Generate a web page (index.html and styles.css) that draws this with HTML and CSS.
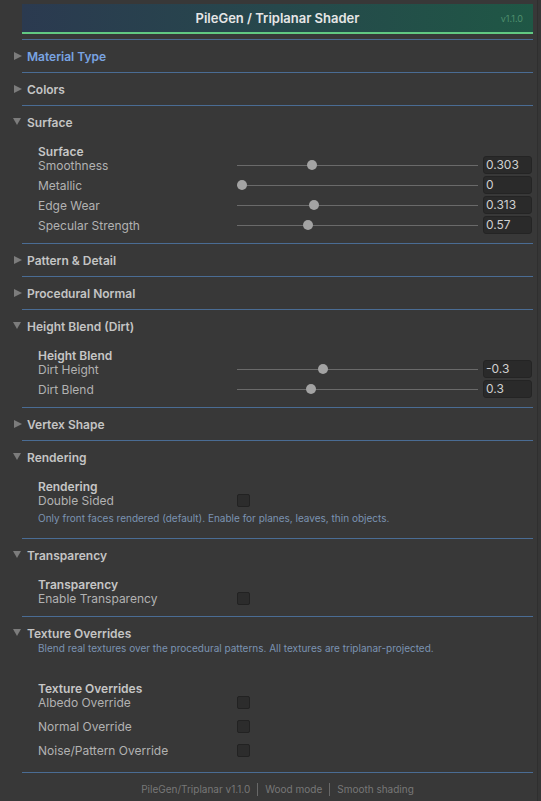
FILE: index.html
```
<!DOCTYPE html>
<html>
<head>
<meta charset="utf-8">
<link rel="stylesheet" href="styles.css">
</head>
<body>
<div class="scrollbar"></div>
<div class="inspector">
  <div class="title-bar">
    <span></span>
    <span class="title">PileGen / Triplanar Shader</span>
    <span class="version">v1.1.0</span>
  </div>
  <div class="rule first"></div>

  <div class="sec-head active"><svg class="tri" viewBox="0 0 8 8"><polygon points="0,0 8,4 0,8"/></svg><span>Material Type</span></div>
  <div class="rule"></div>

  <div class="sec-head"><svg class="tri" viewBox="0 0 8 8"><polygon points="0,0 8,4 0,8"/></svg><span>Colors</span></div>
  <div class="rule"></div>

  <div class="sec-head"><svg class="tri down" viewBox="0 0 8 8"><polygon points="0,0 8,0 4,7"/></svg><span>Surface</span></div>
  <div class="content">
    <div class="sub">Surface</div>
    <div class="row"><span class="label">Smoothness</span><div class="slider"><div class="knob" style="--v:0.303"></div></div><div class="field">0.303</div></div>
    <div class="row"><span class="label">Metallic</span><div class="slider"><div class="knob" style="--v:0"></div></div><div class="field">0</div></div>
    <div class="row"><span class="label">Edge Wear</span><div class="slider"><div class="knob" style="--v:0.313"></div></div><div class="field">0.313</div></div>
    <div class="row"><span class="label">Specular Strength</span><div class="slider"><div class="knob" style="--v:0.285"></div></div><div class="field">0.57</div></div>
  </div>
  <div class="rule"></div>

  <div class="sec-head"><svg class="tri" viewBox="0 0 8 8"><polygon points="0,0 8,4 0,8"/></svg><span>Pattern &amp; Detail</span></div>
  <div class="rule"></div>

  <div class="sec-head"><svg class="tri" viewBox="0 0 8 8"><polygon points="0,0 8,4 0,8"/></svg><span>Procedural Normal</span></div>
  <div class="rule"></div>

  <div class="sec-head"><svg class="tri down" viewBox="0 0 8 8"><polygon points="0,0 8,0 4,7"/></svg><span>Height Blend (Dirt)</span></div>
  <div class="content">
    <div class="sub">Height Blend</div>
    <div class="row"><span class="label">Dirt Height</span><div class="slider"><div class="knob" style="--v:0.35"></div></div><div class="field">-0.3</div></div>
    <div class="row"><span class="label">Dirt Blend</span><div class="slider"><div class="knob" style="--v:0.3"></div></div><div class="field">0.3</div></div>
  </div>
  <div class="rule"></div>

  <div class="sec-head"><svg class="tri" viewBox="0 0 8 8"><polygon points="0,0 8,4 0,8"/></svg><span>Vertex Shape</span></div>
  <div class="rule"></div>

  <div class="sec-head"><svg class="tri down" viewBox="0 0 8 8"><polygon points="0,0 8,0 4,7"/></svg><span>Rendering</span></div>
  <div class="content with-help">
    <div class="sub">Rendering</div>
    <div class="row"><span class="label">Double Sided</span><div class="check"></div></div>
    <div class="help">Only front faces rendered (default). Enable for planes, leaves, thin objects.</div>
  </div>
  <div class="rule"></div>

  <div class="sec-head"><svg class="tri down" viewBox="0 0 8 8"><polygon points="0,0 8,0 4,7"/></svg><span>Transparency</span></div>
  <div class="content">
    <div class="sub">Transparency</div>
    <div class="row"><span class="label">Enable Transparency</span><div class="check"></div></div>
  </div>
  <div class="rule"></div>

  <div class="sec-head described">
    <div class="head-line"><svg class="tri down" viewBox="0 0 8 8"><polygon points="0,0 8,0 4,7"/></svg><span>Texture Overrides</span></div>
    <div class="help head-help">Blend real textures over the procedural patterns. All textures are triplanar-projected.</div>
  </div>
  <div class="content spaced">
    <div class="sub">Texture Overrides</div>
    <div class="row"><span class="label">Albedo Override</span><div class="check"></div></div>
    <div class="row"><span class="label">Normal Override</span><div class="check"></div></div>
    <div class="row"><span class="label">Noise/Pattern Override</span><div class="check"></div></div>
  </div>
  <div class="rule"></div>

  <div class="footer">
    <span>PileGen/Triplanar v1.1.0</span><i class="sep"></i><span>Wood mode</span><i class="sep"></i><span>Smooth shading</span>
  </div>
</div>
</body>
</html>
```
FILE: styles.css
```
html, body {
  margin: 0;
  padding: 0;
  background: #383838;
  width: 541px;
  height: 801px;
  overflow: hidden;
  font-family: Inter, "Noto Sans", sans-serif;
}

.scrollbar {
  position: absolute;
  top: 0;
  right: 0;
  width: 3px;
  height: 801px;
  border-left: 1px solid #2f2f2f;
  background: #363636;
}

.inspector {
  padding: 4px 8px 0 13px;
}

.title-bar {
  margin-left: 9px;
  height: 28px;
  border-bottom: 2px solid #62c982;
  background: linear-gradient(90deg, #2b3a50 0%, #26484c 50%, #1f5745 100%);
  display: grid;
  grid-template-columns: 1fr auto 1fr;
  align-items: center;
  padding: 0 10px;
}

.title {
  color: #e6e6e6;
  font-size: 13px;
  font-weight: 600;
}

.version {
  justify-self: end;
  color: #4f8f6d;
  font-size: 9px;
}

.rule {
  margin-left: 9px;
  height: 1px;
  background: #4a6c94;
}

.rule.first {
  margin-top: 5px;
}

.sec-head {
  height: 32px;
  display: flex;
  align-items: center;
  gap: 5px;
  color: #c4c4c4;
  font-size: 12px;
  font-weight: 600;
}

.sec-head.active {
  color: #79a4e2;
}

.tri {
  width: 8px;
  height: 8px;
  margin-left: 1px;
  fill: #7c7c7c;
  flex: none;
}

.tri.down {
  margin-left: 0;
  margin-right: 1px;
}

.sec-head.described {
  height: auto;
  display: block;
  padding-top: 9px;
}

.head-line {
  display: flex;
  align-items: center;
  gap: 5px;
  height: 14px;
}

.head-help {
  margin-top: 3px;
  padding-left: 25px;
  font-weight: 400;
}

.content {
  padding: 9px 0 9px 25px;
}

.content.with-help {
  padding-bottom: 13px;
}

.content.with-help .help {
  margin-top: 0;
}

.content.spaced {
  padding-top: 29px;
  padding-bottom: 13px;
}

.content.spaced .row {
  height: 18px;
  margin-bottom: 6px;
}

.content.spaced .row:last-child {
  margin-bottom: 0;
}

.sub {
  height: 9px;
  line-height: 9px;
  color: #c6c6c6;
  font-size: 12px;
  font-weight: 600;
}

.row {
  display: grid;
  grid-template-columns: 194px 241px 49px;
  column-gap: 5px;
  align-items: center;
  height: 18px;
  margin-bottom: 2px;
}

.row:last-child {
  margin-bottom: 0;
}

.label {
  color: #b2b2b2;
  font-size: 12px;
}

.slider {
  position: relative;
  height: 18px;
}

.slider::before {
  content: "";
  position: absolute;
  left: 0;
  right: 0;
  top: 9px;
  height: 1px;
  background: #6a6a6a;
}

.knob {
  position: absolute;
  top: 4px;
  width: 10px;
  height: 10px;
  border-radius: 50%;
  background: #a3a3a3;
  left: calc(var(--v) * (100% - 10px));
}

.field {
  height: 16px;
  border: 1px solid #242424;
  border-radius: 3px;
  background: #2a2a2a;
  color: #d0d0d0;
  font-size: 12px;
  line-height: 16px;
  padding-left: 2px;
}

.check {
  width: 11px;
  height: 11px;
  border: 1px solid #222;
  border-radius: 2px;
  background: #2c2c2c;
}

.help {
  margin-top: 1px;
  color: #7b93b2;
  font-size: 10px;
  line-height: 14px;
}

.footer {
  display: flex;
  justify-content: center;
  align-items: center;
  gap: 7px;
  margin-left: 9px;
  padding-top: 9px;
  color: #777;
  font-size: 10px;
  line-height: 14px;
}

.sep {
  width: 1px;
  height: 13px;
  background: #686868;
}
```
